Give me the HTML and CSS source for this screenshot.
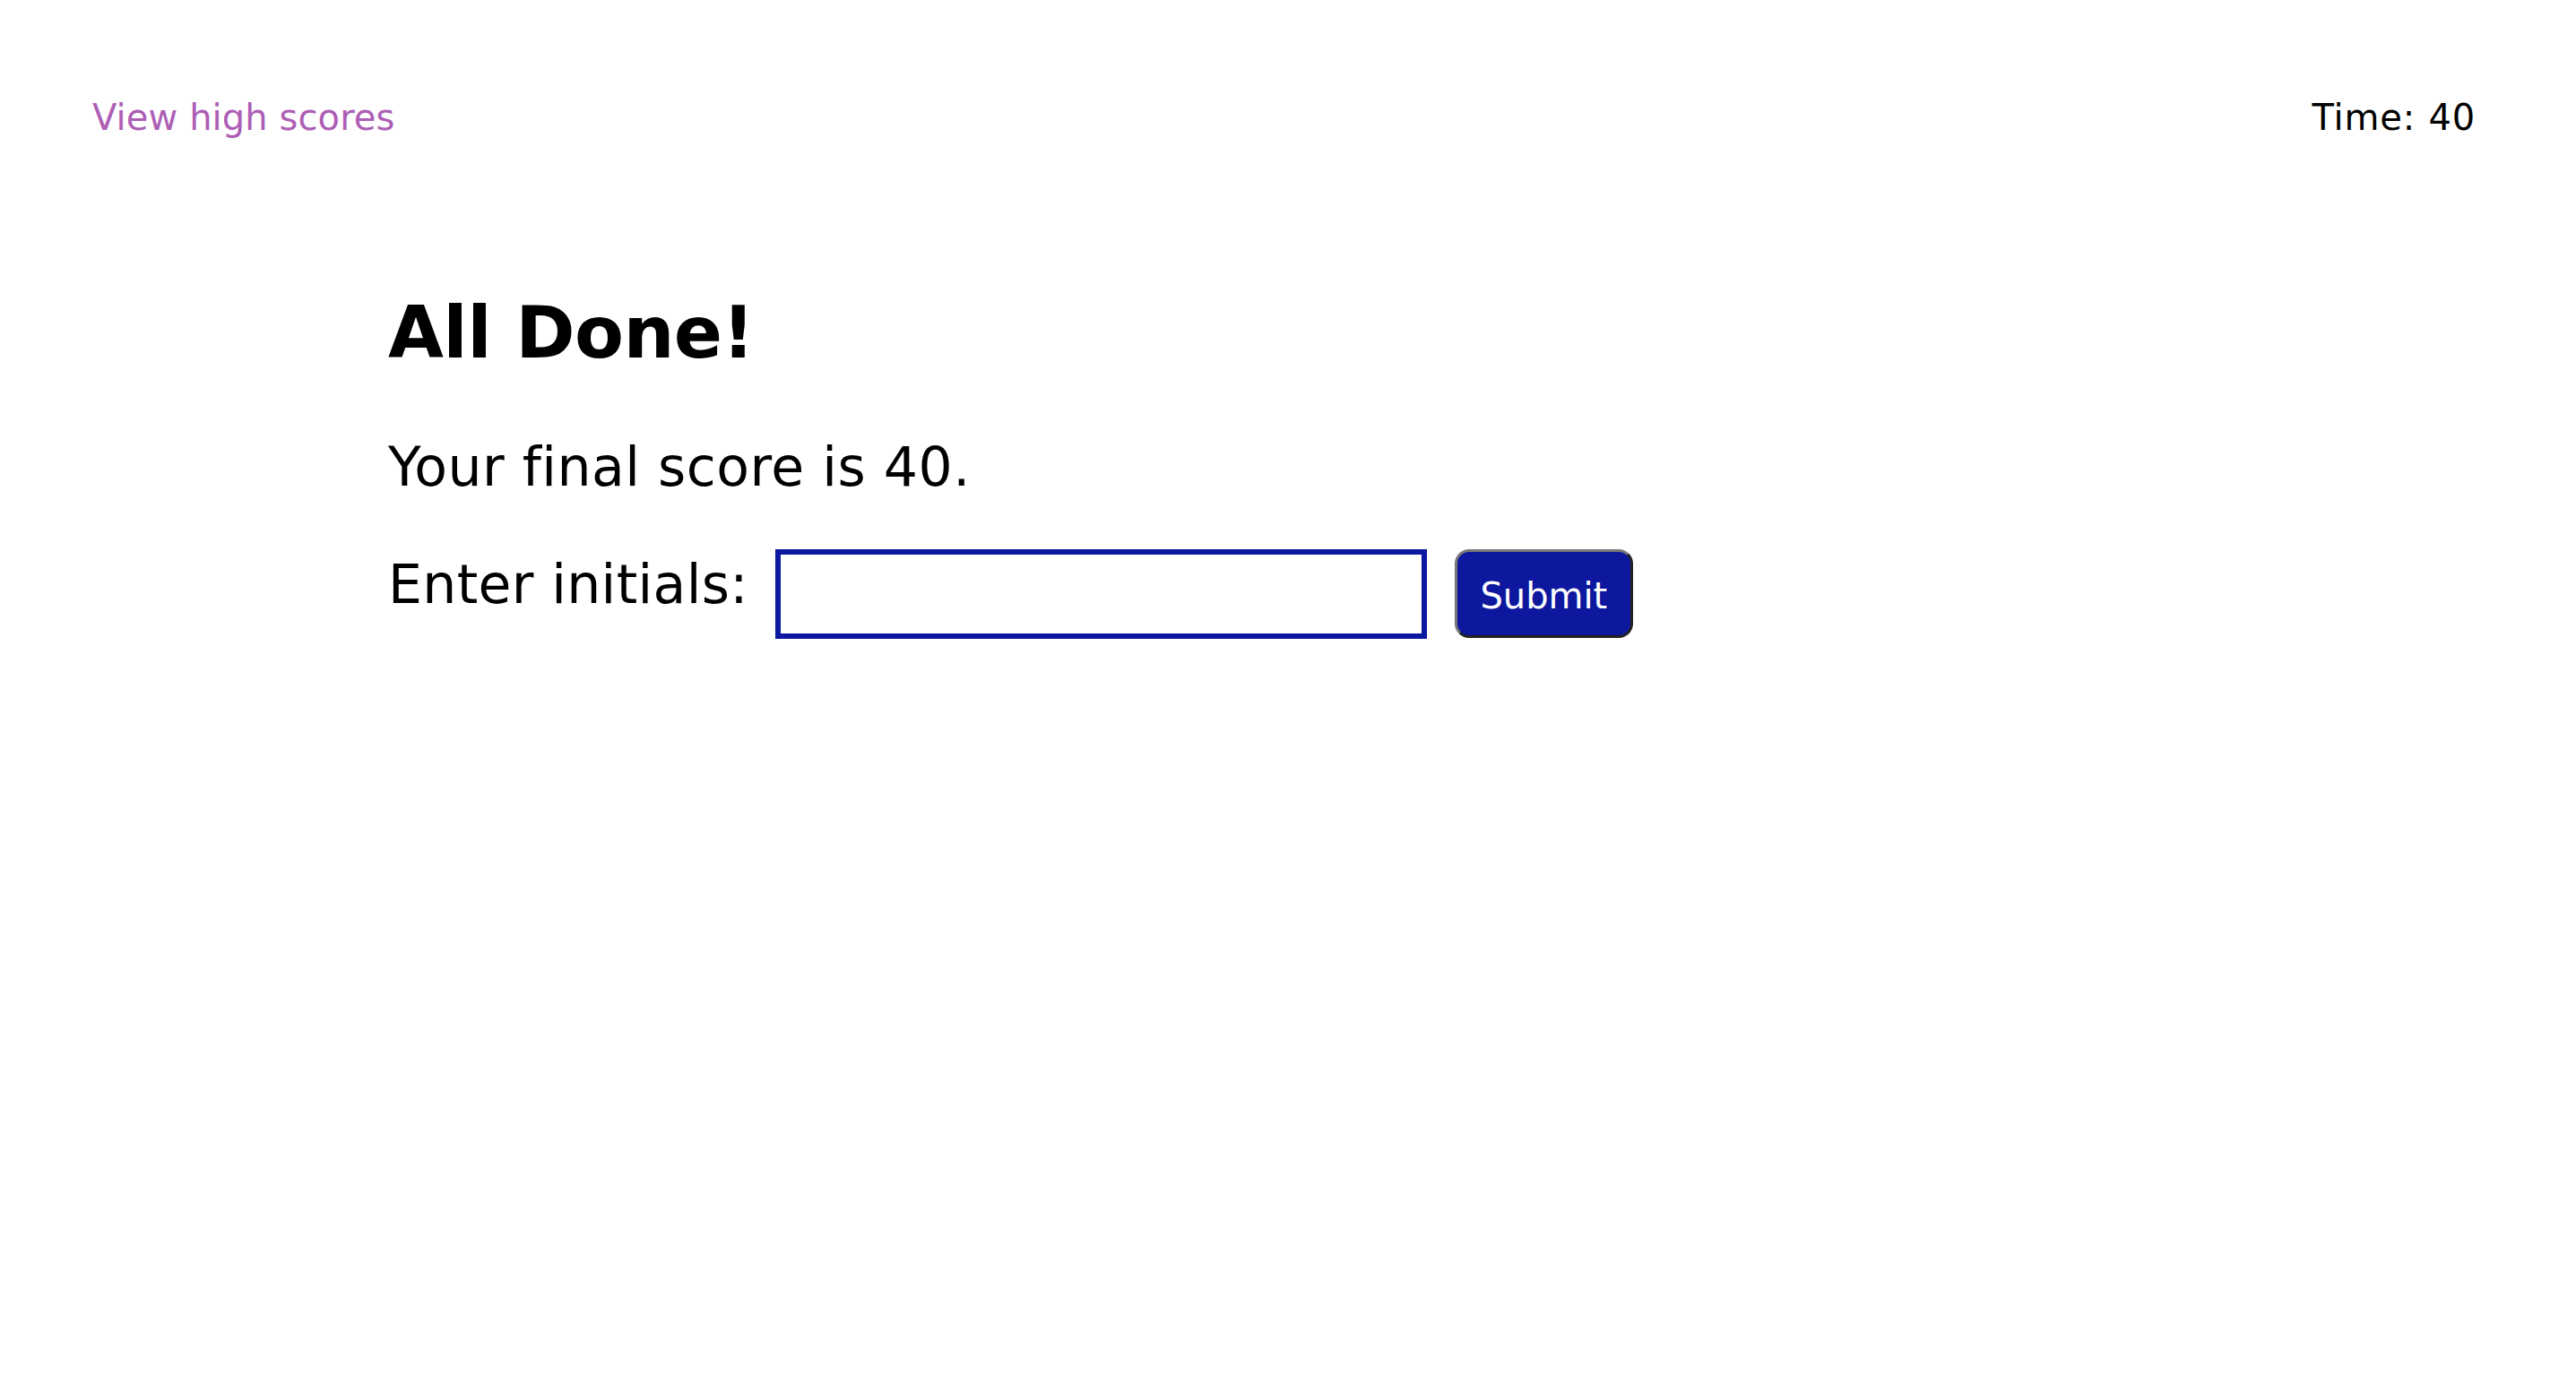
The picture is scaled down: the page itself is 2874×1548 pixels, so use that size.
FILE: index.html
```html
<!DOCTYPE html>
<html lang="en">
<head>
<meta charset="utf-8">
<title>Quiz</title>
<link rel="stylesheet" href="styles.css">
</head>
<body>
<header class="top-bar">
  <a class="high-scores" href="#">View high scores</a>
  <div class="timer">Time: 40</div>
</header>
<main class="content">
  <h1 class="title">All Done!</h1>
  <p class="score">Your final score is 40.</p>
  <form class="initials-form">
    <label class="initials-label" for="initials">Enter initials:</label>
    <input class="initials-input" id="initials" type="text">
    <button class="submit-btn" type="button">Submit</button>
  </form>
</main>
</body>
</html>
```

FILE: styles.css
```css
html, body {
  margin: 0;
  padding: 0;
  background: #ffffff;
}

body {
  font-family: "DejaVu Sans", Verdana, sans-serif;
  font-size: 40px;
  color: #000000;
  font-variant-ligatures: none;
}

.top-bar {
  display: flex;
  justify-content: space-between;
  align-items: flex-start;
  padding: 108px 112px 0 103px;
}

.high-scores {
  color: #ad5eb5;
  text-decoration: none;
  letter-spacing: 0.1px;
}

.timer {
  color: #000000;
  word-spacing: 1px;
  letter-spacing: 0.8px;
}

.content {
  padding-left: 433px;
}

.title {
  font-size: 80px;
  font-weight: bold;
  margin: 171px 0 0 0;
  line-height: normal;
  letter-spacing: -0.6px;
}

.score {
  font-size: 60px;
  margin: 68px 0 0 0;
  line-height: normal;
  letter-spacing: 0.5px;
}

.initials-form {
  display: flex;
  align-items: flex-start;
  margin-top: 57px;
}

.initials-label {
  font-size: 60px;
  line-height: normal;
  margin-top: 4px;
  margin-right: 30px;
  letter-spacing: 0.35px;
}

.initials-input {
  box-sizing: border-box;
  width: 727px;
  height: 100px;
  border: 6px solid #0c189f;
  border-radius: 0;
  outline: none;
  padding: 0 10px;
  font-family: "DejaVu Sans", Verdana, sans-serif;
  font-size: 40px;
  margin: 0;
}

.submit-btn {
  box-sizing: border-box;
  width: 199px;
  height: 99px;
  margin-left: 31px;
  background: #0d189f;
  color: #ffffff;
  font-family: "DejaVu Sans", Verdana, sans-serif;
  font-size: 40px;
  font-variant-ligatures: none;
  border-style: solid;
  border-width: 3px;
  border-color: #777777 #222222 #222222 #777777;
  border-radius: 16px;
  padding: 5px 0 0 0;
}
```
